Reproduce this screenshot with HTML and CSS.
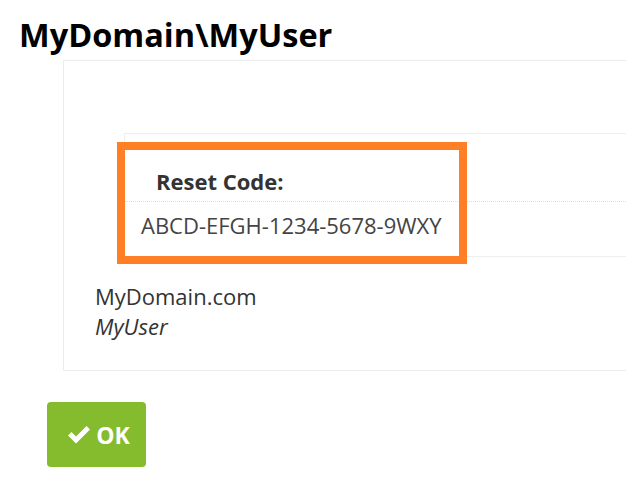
FILE: index.html
```html
<!DOCTYPE html>
<html>
<head>
<meta charset="utf-8">
<link rel="stylesheet" href="styles.css">
</head>
<body>
<h1 class="title">MyDomain\MyUser</h1>
<div class="card">
  <div class="code-wrap">
    <table class="code-table">
      <tr><th class="code-head">Reset Code:</th></tr>
      <tr><td class="code-value">ABCD-EFGH-1234-5678-9WXY</td></tr>
    </table>
    <div class="highlight"></div>
  </div>
  <div class="account">
    <div class="domain">MyDomain.com</div>
    <div class="user">MyUser</div>
  </div>
</div>
<button class="ok-btn" type="button">
  <svg class="check" viewBox="0 0 26 21" width="26" height="21" aria-hidden="true">
    <path d="M2 11.5 L5.5 8 L10 12.5 L20.5 2 L24 5.5 L10 19.5 Z" fill="#fff"/>
  </svg>
  <span>OK</span>
</button>
</body>
</html>
```
FILE: styles.css
```css
html, body {
  margin: 0;
  padding: 0;
  background: #fff;
  overflow: hidden;
}
body {
  font-family: "Open Sans", "Liberation Sans", sans-serif;
  font-size: 22px;
  line-height: 30px;
  color: #333;
  width: 626px;
  height: 484px;
}
.title {
  margin: 14px 0 5px 19px;
  font-size: 32.5px;
  line-height: 41px;
  font-weight: 700;
  color: #000;
}
.card {
  margin-left: 63px;
  border: 1px solid #ececec;
  border-right: none;
  padding: 72px 0 29px 31px;
}
.code-wrap {
  position: relative;
  margin-left: 29px;
}
.code-table {
  width: 100%;
  border-collapse: collapse;
  border: 1px solid #eee;
  border-right: none;
}
.code-head {
  text-align: left;
  font-weight: 700;
  padding: 32px 0 5px 31px;
  border-bottom: 1px dotted #ddd;
  color: #333;
}
.code-value {
  padding: 8px 0 16px 16px;
  color: #444;
}
.highlight {
  position: absolute;
  left: -7px;
  top: 9px;
  width: 334px;
  height: 106px;
  border: 8px solid #ff7f27;
}
.account {
  margin-top: 24px;
}
.user {
  font-style: italic;
}
.ok-btn {
  margin: 31px 0 0 47px;
  width: 99px;
  height: 65px;
  border: none;
  border-radius: 4px;
  background: #84bc2e;
  color: #fff;
  font-family: "Open Sans", "Liberation Sans", sans-serif;
  font-size: 23px;
  font-weight: 700;
  display: flex;
  align-items: center;
  justify-content: center;
  gap: 4px;
  padding: 0 0 0 3px;
}
.check {
  display: block;
}
```
